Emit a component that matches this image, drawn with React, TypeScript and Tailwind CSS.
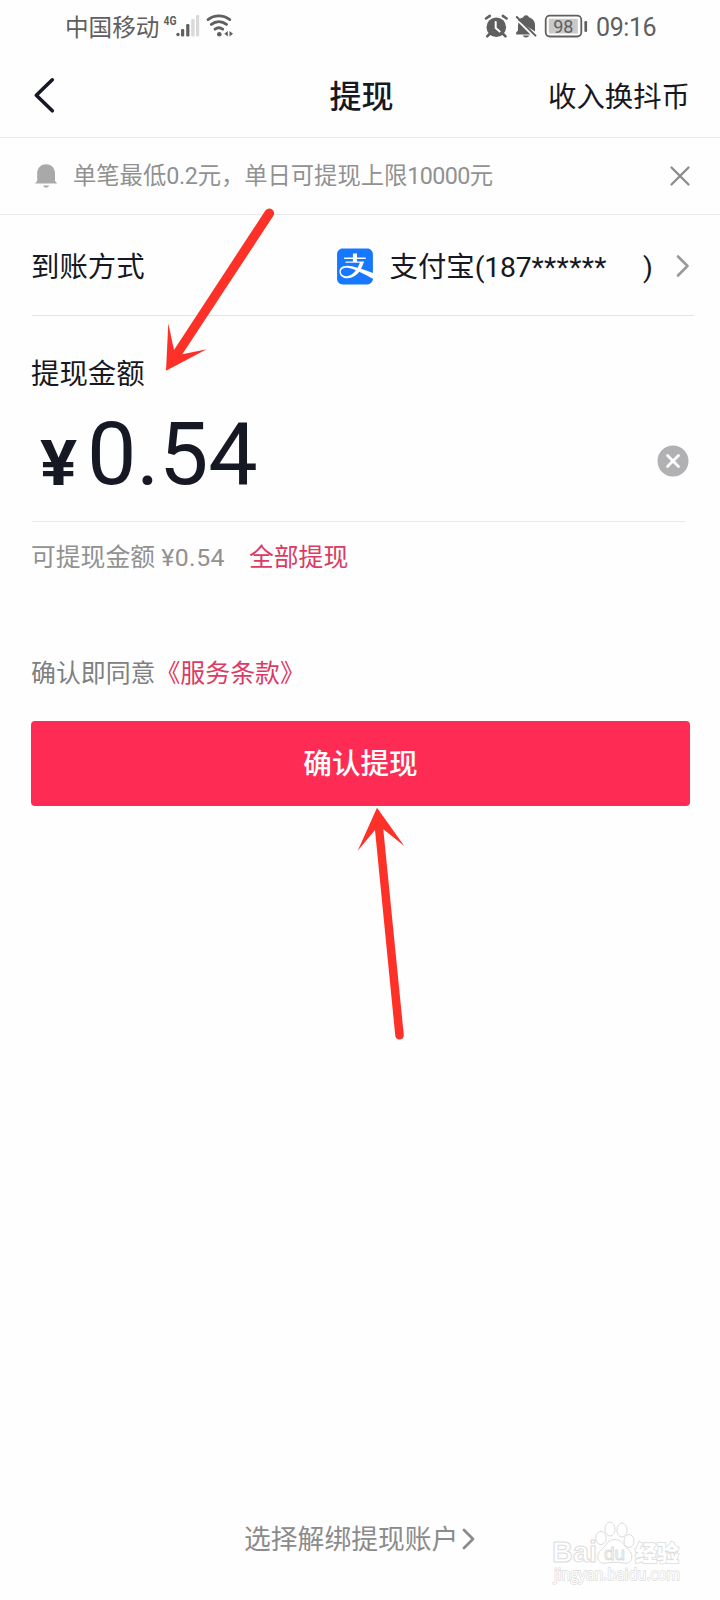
import React from "react";
import { FaAlipay } from "react-icons/fa";

function StatusBar() {
  return (
    <div className="flex h-[54px] items-center justify-between pr-[62px] pl-[65px] text-[#5f5f5f]">
      <div className="flex items-center">
        <span className="pt-[2px] text-[23.6px] leading-[52px]">中国移动</span>
        <svg width="76" height="54" viewBox="159 0 76 54" fill="currentColor">
          <text x="163.6" y="24.6" fontSize="13" fontWeight="700" textLength="13" lengthAdjust="spacingAndGlyphs" fontFamily="Roboto, sans-serif">4G</text>
          <circle cx="178" cy="34.5" r="1.7" />
          <rect x="181" y="29" width="3.2" height="7.5" rx="1.2" />
          <rect x="186.2" y="24" width="3.2" height="12.5" rx="1.2" />
          <rect x="191.2" y="19" width="3.4" height="17.5" rx="1.2" fill="#d9d9d9" />
          <rect x="196" y="15" width="3.2" height="21.5" rx="1.2" fill="#d9d9d9" />
          <g fill="none" stroke="currentColor" strokeWidth="2.8" strokeLinecap="round">
            <path d="M208 19.6c6.400-5 15.200-5 21.800 0" />
            <path d="M211.300 24.400c4.700-3.600 10.600-3.600 15.200 0" />
            <path d="M215 29.200c2.500-1.900 5.200-1.900 7.700 0" />
          </g>
          <circle cx="219.300" cy="34.300" r="2.300" />
          <path d="M224.300 33.800l3.500-2.800v5.400zM229.500 31l3.500 2.800-3.500 2.600z" />
        </svg>
      </div>
      <div className="flex items-center">
        <svg width="112" height="54" viewBox="482 0 112 54" fill="currentColor">
          <circle cx="496.300" cy="27.300" r="9.800" />
          <path d="M486 18.500l3.800-2.600M502.800 15.900l3.800 2.600M489.500 34l-2.300 2.300M503.200 34l2.300 2.300" stroke="currentColor" strokeWidth="2.600" strokeLinecap="round" />
          <path d="M495.700 22v6l4 3.400" fill="none" stroke="#fff" strokeWidth="2" strokeLinecap="round" />
          <path d="M518.200 20.500c.8-1.500 3.200-2.700 5.200-3.200 0-2.800 5.400-2.800 5.400 0 4 1 6.200 4.200 6.200 8v6.200z" />
          <path d="M518.400 22.600l12 11.800h-14.200v-2.200l1.800-1.800v-5.100z" />
          <path d="M522.800 35.600h6.400c-.6 2.600-5.800 2.600-6.400 0z" />
          <path d="M516.800 17l18.700 18.600" stroke="currentColor" strokeWidth="2" strokeLinecap="round" />
          <rect x="545.700" y="15.700" width="35.600" height="20.800" rx="4.200" fill="none" stroke="currentColor" strokeWidth="1.800" />
          <rect x="548.800" y="18.800" width="29" height="14.600" rx="1" fill="#c9c9c9" />
          <rect x="584.400" y="21" width="2.700" height="11" rx="1.200" />
          <text x="563.300" y="32.600" fontSize="18" textAnchor="middle" fontFamily="Roboto, sans-serif">98</text>
        </svg>
        <span className="w-[64px] pt-[2px] pl-[2px] whitespace-nowrap font-[Roboto] text-[25px] leading-[54px] tracking-[-0.4px]">09:16</span>
      </div>
    </div>
  );
}

function Header() {
  return (
    <div className="grid h-[84px] grid-cols-[1fr_auto_1fr] items-center border-b-[1.5px] border-[#e9e9e9] pr-[30px] pl-[33px] text-[#161823]">
      <svg className="-mt-[2px]" width="24" height="40" viewBox="33 74 24 40" fill="none" stroke="currentColor" strokeWidth="3.600" strokeLinecap="round" strokeLinejoin="round">
        <path d="M52.300 78.800L36.300 94.200l16 15.600" />
      </svg>
      <h1 className="pt-[3px] text-[32px] leading-[78px] font-medium">提现</h1>
      <span className="pt-[4px] text-right text-[28.400px] leading-[78px]">收入换抖币</span>
    </div>
  );
}

function Notice() {
  return (
    <div className="flex h-[77px] items-center border-b-[1.5px] border-[#e9e9e9] pr-[29px] pl-[34px] text-[#919191]">
      <svg width="24" height="26" viewBox="0 0 24 26" fill="#a9a9a9">
        <path d="M3.200 18V10.500c0-12.200 17.800-12.200 17.800 0V18l2.200 2.600H1z" />
        <path d="M9.200 22.400h5.800c-.6 2.800-5.200 2.800-5.800 0z" />
      </svg>
      <span className="mt-[1px] ml-[15px] flex-1 text-[23.300px] whitespace-nowrap">
        单笔最低<span className="tracking-[-0.300px]">0.2</span>元，单日可提现上限<span className="tracking-[-0.600px]">10000</span>元
      </span>
      <svg width="22" height="22" viewBox="0 0 22 22" fill="none" stroke="#8a8a8a" strokeWidth="2.200" strokeLinecap="round">
        <path d="M2.500 2.500l17 17M19.500 2.500l-17 17" />
      </svg>
    </div>
  );
}

function AccountRow() {
  return (
    <div className="mr-[26px] ml-[32px] flex h-[101px] items-center border-b-[1.5px] border-[#e4e4e4] text-[28.400px] text-[#161823]">
      <span className="mt-[7px] -ml-[1px]">到账方式</span>
      <FaAlipay className="mt-[3px] ml-[192px] h-[41px] w-[36px] text-[#1677ff]" />
      <span className="mt-[7px] ml-[17px] whitespace-nowrap">
        支付宝<span className="tracking-[-0.200px]">(187</span><span className="tracking-[0.300px]">******</span>
      </span>
      <span className="mt-[7px] ml-auto">)</span>
      <svg className="mt-[1px] mr-[3px] ml-[22px]" width="16" height="24" viewBox="0 0 16 24" fill="none" stroke="#999" strokeWidth="2.600" strokeLinecap="round" strokeLinejoin="round">
        <path d="M3 2.500l9.500 9.500L3 21.500" />
      </svg>
    </div>
  );
}

function Amount() {
  return (
    <section className="px-[32px] text-[#161823]">
      <div className="-ml-[1px] flex h-[114px] items-center pt-[4px] text-[28.400px] leading-none">提现金额</div>
      <div className="mr-[2px] flex h-[92px] items-start border-b-[1.500px] border-[#ebebeb]">
        <span className="mt-[2px] ml-[8px] w-[47px] origin-left scale-x-[1.100] font-[Roboto] text-[63px] leading-[64px] font-bold">¥</span>
        <span className="-mt-[8px] font-[Roboto] text-[88px] leading-[64px] tracking-[-0.300px]">0.54</span>
        <svg className="mt-[15px] -mr-[3px] ml-auto" width="32" height="32" viewBox="0 0 32 32">
          <circle cx="16" cy="16" r="15.500" fill="#b1b1b3" />
          <path d="M10.500 10.500l11 11M21.500 10.500l-11 11" stroke="#fff" strokeWidth="2.800" strokeLinecap="round" />
        </svg>
      </div>
      <div className="-ml-[1px] flex h-[72px] items-center text-[24.800px]">
        <span className="text-[#919191]">
          可提现金额 <span className="tracking-[0.500px]">¥0.54</span>
        </span>
        <span className="ml-[24px] text-[#dc3a63]">全部提现</span>
      </div>
    </section>
  );
}

function Watermark() {
  return (
    <svg className="absolute top-[1515px] left-[545px]" width="150" height="75" viewBox="545 1515 150 75" fill="#fff" stroke="#dcdcdc" strokeWidth="1">
      <text x="552" y="1562" fontSize="29" fontWeight="700" textLength="45" lengthAdjust="spacingAndGlyphs" fontFamily="Liberation Sans, sans-serif">Bai</text>
      <ellipse cx="601" cy="1538" rx="5.200" ry="6.600" />
      <ellipse cx="610" cy="1529" rx="5" ry="7" />
      <ellipse cx="622" cy="1530" rx="5" ry="7" />
      <ellipse cx="629" cy="1541" rx="5" ry="6.500" />
      <path d="M615 1539.500c-7 0-9 6-13 9.500-8 7-4 16 5 14 5-1 11-1 16 0 9 2 12-7 5-14-5-4-6-9.500-13-9.500z" />
      <text x="604" y="1560" fontSize="19" textLength="21" fontFamily="Liberation Sans, sans-serif">du</text>
      <text x="635" y="1560.500" fontSize="22" fontWeight="900" textLength="44" strokeWidth="1.600" paintOrder="stroke" fontFamily="Noto Sans CJK SC, sans-serif">经验</text>
      <text x="554" y="1580" fontSize="16" textLength="126" lengthAdjust="spacingAndGlyphs" strokeWidth="1.400" paintOrder="stroke" fontFamily="Open Sans, sans-serif">jingyan.baidu.com</text>
    </svg>
  );
}

function Arrows() {
  return (
    <svg className="pointer-events-none absolute top-0 left-0" width="720" height="1600" viewBox="0 0 720 1600" fill="#fe3128">
      <path d="M265.200 210.800L174 350l-5.700-26.700L166 370.700l40.700-21.400-24.400 5L273.400 215.800A4.800 4.800 0 0 0 265.200 210.800z" />
      <path d="M377 807.700l-19.300 43L375 830l20.300 206a4.300 4.300 0 0 0 8.500-.7L383.300 829.300l21 16.700z" />
    </svg>
  );
}

export default function App() {
  return (
    <div className="relative flex h-[1600px] w-[720px] flex-col overflow-hidden bg-[#fefefe] font-['Roboto','Noto_Sans_CJK_SC',sans-serif]">
      <StatusBar />
      <Header />
      <Notice />
      <AccountRow />
      <Amount />
      <div className="mt-[61px] flex h-[37px] items-center px-[31px] text-[24.900px]">
        <span className="text-[#808080]">确认即同意</span>
        <span className="text-[#dc3a63]">《服务条款》</span>
      </div>
      <button className="mt-[29px] mr-[30px] ml-[31px] h-[85px] rounded-[4px] bg-[#fe2c55] pt-[2px] text-[28.600px] font-medium text-white">确认提现</button>
      <div className="mt-auto mb-[41px] flex h-[40px] items-center pl-[244px] text-[26.800px] text-[#8b8b8b]">
        <span className="pt-[2px]">选择解绑提现账户</span>
        <svg className="ml-[3px]" width="16" height="22" viewBox="0 0 16 22" fill="none" stroke="currentColor" strokeWidth="2.800" strokeLinecap="round" strokeLinejoin="round">
          <path d="M3 2l9 9-9 9" />
        </svg>
      </div>
      <Watermark />
      <Arrows />
    </div>
  );
}
